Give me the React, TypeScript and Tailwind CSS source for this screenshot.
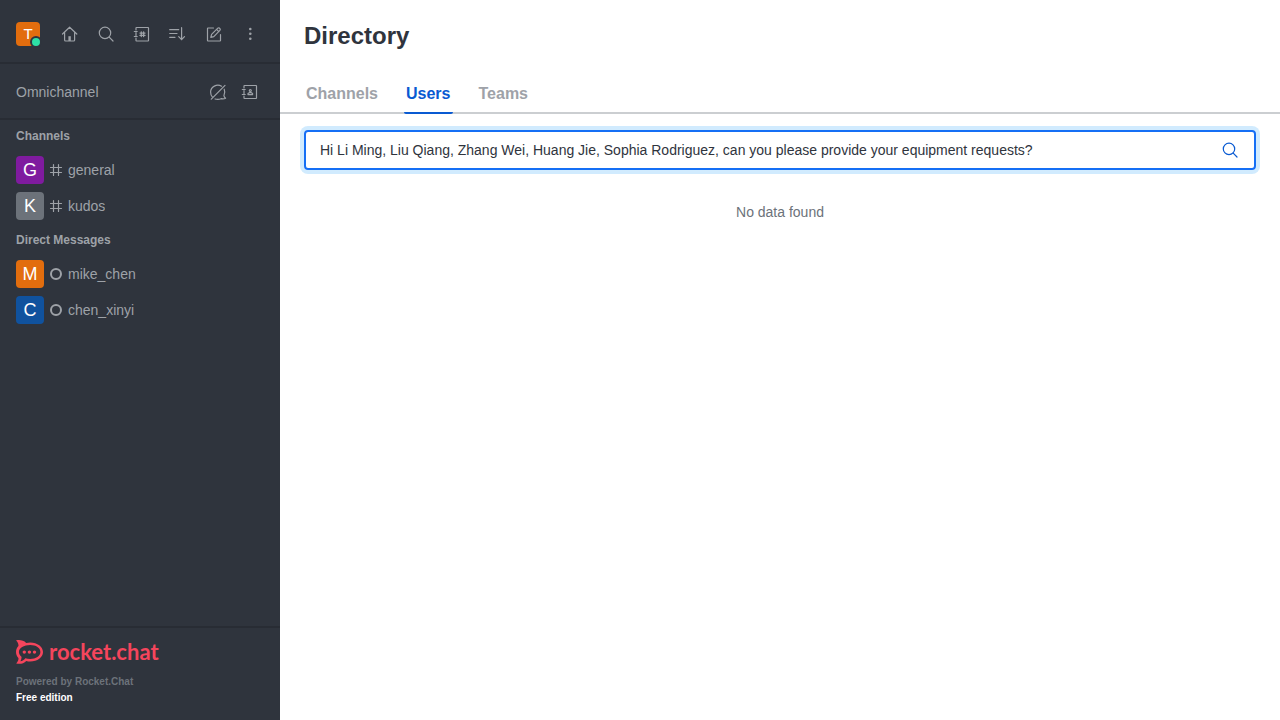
import { useState, type ReactNode } from 'react';

function Icon({ children, className = 'size-5' }: { children: ReactNode; className?: string }) {
  return (
    <svg
      viewBox="0 0 20 20"
      className={className}
      fill="none"
      stroke="currentColor"
      strokeWidth="1.2"
      strokeLinecap="round"
      strokeLinejoin="round"
      aria-hidden="true"
    >
      {children}
    </svg>
  );
}

const HomeIcon = () => (
  <Icon>
    <path d="M2.5 10 9.6 3.2 16.8 10M4.6 8.2V16q0 1 1 1h8q1 0 1-1V8.2" />
    <path d="M8.4 12.2h2.4V17H8.4z" fill="currentColor" stroke="none" />
  </Icon>
);

const SearchIcon = () => (
  <Icon>
    <circle cx="9" cy="8.900" r="5.700" />
    <path d="m13.200 13.200 3.800 3.800" />
  </Icon>
);

const DirectoryIcon = () => (
  <Icon>
    <path d="M4 6V4q0-.5.5-.5H16q.5 0 .5.5v12.500q0 .5-.5.5H4.500q-.5 0-.5-.5v-2.500M4 8.500v3" />
    <path d="M2.300 7.500h2.900M2.300 12.500h2.900" />
    <path d="M9.300 7.800v4.800M11.600 7.800v4.800M8 9.100h5M8 11.400h5" strokeWidth="1.300" />
  </Icon>
);

const SortIcon = () => (
  <Icon>
    <path d="M1.700 5.700h9M1.700 9.500h7.300M1.700 13.300h5.300M13.600 3.700v12M10.700 12.700l2.900 3 2.900-3" />
  </Icon>
);

const EditIcon = () => (
  <Icon>
    <path d="M9.500 4H4q-.5 0-.5.5v12q0 .5.5.5h12q.5 0 .5-.5V10.500" />
    <path d="m6.800 13.400.8-3L13.800 4.200q.7-.7 1.500-.2l.8.8q.5.800-.2 1.500L9.800 12.600zM12.600 5.400l2.200 2.200" />
  </Icon>
);

const KebabIcon = () => (
  <Icon>
    <g fill="currentColor" stroke="none">
      <circle cx="10.300" cy="5" r="1.300" />
      <circle cx="10.300" cy="9.800" r="1.300" />
      <circle cx="10.300" cy="14.700" r="1.300" />
    </g>
  </Icon>
);

const OmnichannelOffIcon = () => (
  <Icon>
    <path d="M13.600 4.200C8.800 1.600 2.600 4.600 2.600 10q0 3 1.700 4.900M16.200 7.200c.9 2 .7 4.600-.3 6.500.2 1 .8 1.900 1.700 2.500-1.400.8-3.400.7-4.500.5-2 .9-4.200.9-6.100.3" />
    <path d="M3.300 17.200 17 3.400" />
  </Icon>
);

const ContactIcon = () => (
  <Icon>
    <path d="M4 6V4q0-.5.5-.5H16q.5 0 .5.5v12q0 .5-.5.5H4.500q-.5 0-.5-.5v-2M4 8.500v3" />
    <path d="M2.300 7.500h2.900M2.300 12.500h2.900" />
    <circle cx="10.300" cy="8.500" r="1" />
    <path d="M8 12.600v-1l1.300-.9h2l1.300.9v1z" />
  </Icon>
);

const HashIcon = () => (
  <svg viewBox="0 0 16 16" className="size-4" fill="none" stroke="currentColor" strokeWidth="1.200" strokeLinecap="round" aria-hidden="true">
    <path d="M5.500 2.500v11M10.500 2.500v11M2.500 5.500h11M2.500 10.500h11" />
  </svg>
);

const OfflineIcon = () => (
  <svg viewBox="0 0 16 16" className="size-4" fill="none" stroke="currentColor" strokeWidth="2" role="img" aria-label="Offline">
    <circle cx="8" cy="8" r="5" />
  </svg>
);

const LogoMark = () => (
  <svg viewBox="0 0 27 24" className="h-6 w-[27px]" fill="#f5455c" aria-hidden="true">
    <path
      fillRule="evenodd"
      d="M0 .4C3.500-.4 7.600.3 10.200 2.900c1.300-.3 2.700-.5 4-.5C21.400 2.400 27 6.700 27 12s-5.600 9.500-12.800 9.500c-1.400 0-2.700-.1-3.900-.5C7.600 23.800 3.600 24.400.2 23.400c1.700-1.700 2.500-3.400 2.200-5.400C.9 16.300 0 14.300 0 12s.9-4.300 2.400-5.900C2.700 4 1.800 2 0 .4zM14.200 5.100C7.900 5.100 2.900 8.100 2.900 12c0 1.900 1 3.400 2.600 4.700.2 1.700-.3 3.100-1.100 4.500 2-.2 3.600-1.200 4.900-3 1.500.5 3.200.7 4.900.7 5.700 0 10.200-3.100 10.200-7s-4.500-6.800-10.200-6.800z"
    />
    <circle cx="8.300" cy="12.100" r="1.700" />
    <circle cx="13.400" cy="12.100" r="1.700" />
    <circle cx="18.500" cy="12.100" r="1.700" />
  </svg>
);

function IconButton({ label, children }: { label: string; children: ReactNode }) {
  return (
    <button type="button" aria-label={label} className="flex size-7 items-center justify-center rounded hover:bg-[#1f2329]">
      {children}
    </button>
  );
}

type Room = { name: string; initial: string; color: string; icon: ReactNode };

const channels: Room[] = [
  { name: 'general', initial: 'G', color: 'bg-[#7f1b9f]', icon: <HashIcon /> },
  { name: 'kudos', initial: 'K', color: 'bg-[#6c727a]', icon: <HashIcon /> },
];

const directMessages: Room[] = [
  { name: 'mike_chen', initial: 'M', color: 'bg-[#e26d0e]', icon: <OfflineIcon /> },
  { name: 'chen_xinyi', initial: 'C', color: 'bg-[#10529e]', icon: <OfflineIcon /> },
];

function RoomSection({ title, rooms }: { title: string; rooms: Room[] }) {
  return (
    <section>
      <h2 className="flex h-8 items-center px-4 text-xs font-bold">{title}</h2>
      <ul>
        {rooms.map((room) => (
          <li key={room.name}>
            <a href={`#${room.name}`} className="flex h-9 items-center gap-1 px-4 text-sm hover:bg-[#1f2329]">
              <span className={`flex size-7 items-center justify-center rounded text-lg text-white ${room.color}`}>
                {room.initial}
              </span>
              {room.icon}
              <span className="truncate">{room.name}</span>
            </a>
          </li>
        ))}
      </ul>
    </section>
  );
}

function Sidebar() {
  return (
    <aside className="flex w-70 shrink-0 flex-col bg-[#2f343d] text-[#9ea2a8]">
      <header className="flex h-16 items-center justify-between border-b-2 border-[#282c34] px-4 pt-1.5">
        <button type="button" aria-label="User menu" className="relative size-6 rounded bg-[#e26d0e] text-[15px] leading-6 text-white">
          T
          <span className="absolute -right-0.5 -bottom-0.5 size-3 rounded-full border-2 border-[#2f343d] bg-[#2de0a5]" />
        </button>
        <nav className="flex gap-2">
          <IconButton label="Home"><HomeIcon /></IconButton>
          <IconButton label="Search"><SearchIcon /></IconButton>
          <IconButton label="Directory"><DirectoryIcon /></IconButton>
          <IconButton label="Display"><SortIcon /></IconButton>
          <IconButton label="Create new"><EditIcon /></IconButton>
          <IconButton label="Administration"><KebabIcon /></IconButton>
        </nav>
      </header>
      <div className="flex h-14 items-center gap-1 border-b-2 border-[#282c34] px-4 pt-0.5">
        <span className="grow text-sm">Omnichannel</span>
        <IconButton label="Turn on answer chats"><OmnichannelOffIcon /></IconButton>
        <IconButton label="Contact Center"><ContactIcon /></IconButton>
      </div>
      <nav className="grow">
        <RoomSection title="Channels" rooms={channels} />
        <RoomSection title="Direct Messages" rooms={directMessages} />
      </nav>
      <footer className="border-t-2 border-[#282c34] px-4 pt-3 pb-3.5">
        <a href="#home" className="flex h-6 items-center gap-1.5 font-[Lato,sans-serif] text-[22px] leading-6 font-bold text-[#f5455c]">
          <LogoMark />
          <span>rocket.chat</span>
        </a>
        <p className="pt-2.5 text-[10px] leading-4 font-bold text-[#6c727a]">Powered by Rocket.Chat</p>
        <p className="text-[10px] leading-4 font-bold text-white">Free edition</p>
      </footer>
    </aside>
  );
}

const tabs = ['Channels', 'Users', 'Teams'];

export default function App() {
  const [active, setActive] = useState('Users');
  const [query, setQuery] = useState(
    'Hi Li Ming, Liu Qiang, Zhang Wei, Huang Jie, Sophia Rodriguez, can you please provide your equipment requests?',
  );
  return (
    <div className="flex min-h-screen bg-white font-['Liberation_Sans',Arial,sans-serif]">
      <Sidebar />
      <main className="flex min-w-0 grow flex-col text-[#2f343d]">
        <h1 className="px-6 pt-5 pb-5 text-2xl leading-8 font-bold">Directory</h1>
        <div role="tablist" className="flex gap-6 border-b-2 border-[#cbced1] px-6">
          {tabs.map((tab) => (
            <button
              key={tab}
              type="button"
              role="tab"
              aria-selected={tab === active}
              onClick={() => setActive(tab)}
              className={
                tab === active
                  ? '-mb-0.5 rounded-xs border-b-2 border-[#095ad2] px-0.5 pt-2.5 pb-1.5 text-base font-bold text-[#095ad2]'
                  : '-mb-0.5 border-b-2 border-transparent px-0.5 pt-2.5 pb-1.5 text-base font-bold text-[#9ea2a8]'
              }
            >
              {tab}
            </button>
          ))}
        </div>
        <div className="px-6 pt-4">
          <label className="flex h-10 items-center rounded border-2 border-[#156ff5] px-3.5 ring-4 ring-[#d1ebfe]">
            <input
              type="text"
              aria-label="Search Users"
              value={query}
              onChange={(e) => setQuery(e.target.value)}
              className="min-w-0 grow bg-transparent text-sm outline-none"
            />
            <span className="text-[#095ad2]"><SearchIcon /></span>
          </label>
        </div>
        <p className="pt-8 text-center text-sm text-[#6c727a]">No data found</p>
      </main>
    </div>
  );
}
